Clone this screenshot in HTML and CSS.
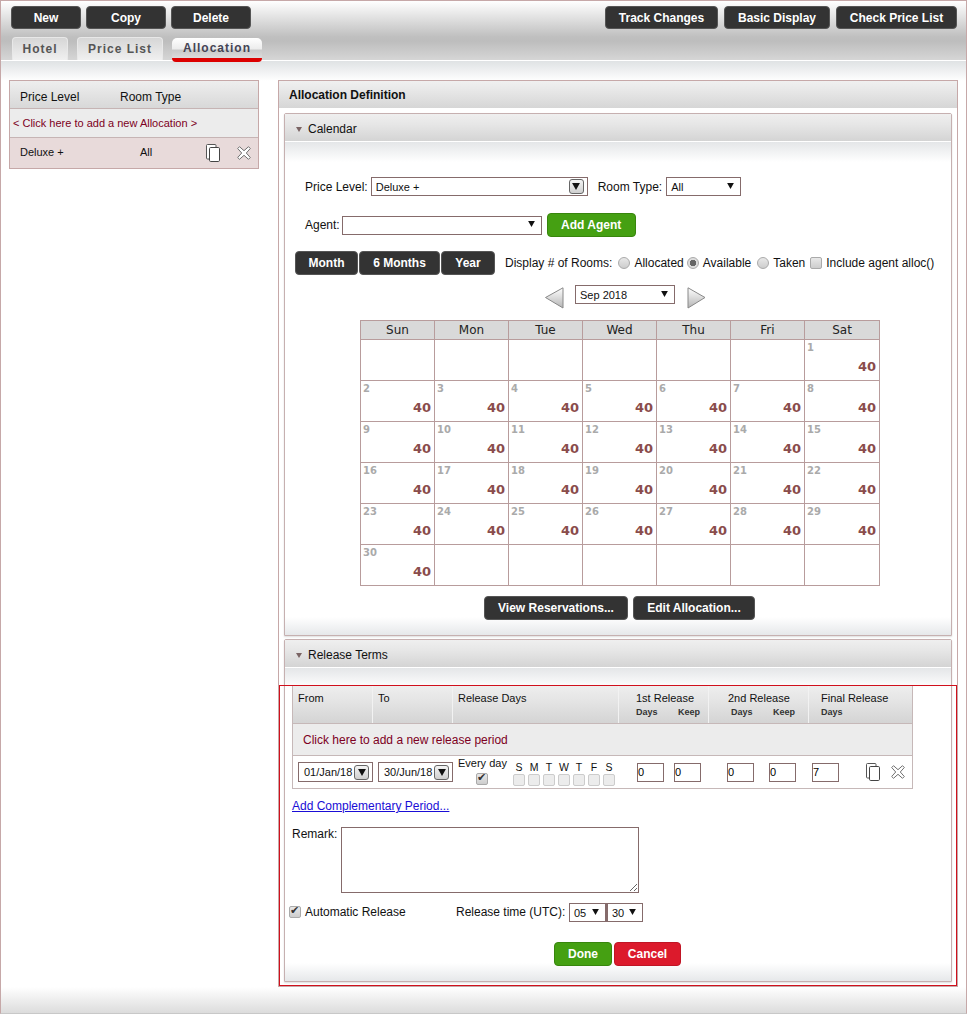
FILE: index.html
```html
<!DOCTYPE html>
<html lang="en">
<head>
<meta charset="utf-8">
<title>Allocation</title>
<link rel="stylesheet" href="styles.css">
</head>
<body>
<svg class="defs" width="0" height="0" aria-hidden="true">
  <defs>
    <linearGradient id="navfill" x1="0" y1="0" x2="0" y2="1">
      <stop offset="0" stop-color="#ffffff"/><stop offset="1" stop-color="#b5b5b5"/>
    </linearGradient>
    <symbol id="copy" viewBox="0 0 14 18">
      <path d="M10 3V1.5Q10 .5 9 .5H1.5Q.5 .5 .5 1.5V14Q.5 15 1.5 15H3" fill="#fff" stroke="#555"/>
      <rect x="3.5" y="3.5" width="10" height="14" rx="1.2" fill="#fff" stroke="#444"/>
    </symbol>
    <symbol id="del" viewBox="0 0 14 14">
      <path d="M2.5 .7 7 4.7 11.5 .7 13.3 2.5 9.3 7 13.3 11.5 11.5 13.3 7 9.3 2.5 13.3 .7 11.5 4.7 7 .7 2.5Z" fill="#fff" stroke="#707070"/>
    </symbol>
    <symbol id="tri" viewBox="0 0 9 8"><path d="M0 0H9L4.5 8Z" fill="#111"/></symbol>
  </defs>
</svg>
<div class="page">
  <header class="topbar">
    <div class="btnrow">
      <div class="group">
        <button class="btn w70">New</button>
        <button class="btn w80">Copy</button>
        <button class="btn w80">Delete</button>
      </div>
      <div class="group gap6">
        <button class="btn w113">Track Changes</button>
        <button class="btn w106">Basic Display</button>
        <button class="btn w121">Check Price List</button>
      </div>
    </div>
    <nav class="tabs">
      <div class="tab t56">Hotel</div>
      <div class="tab t86">Price List</div>
      <div class="tab active">Allocation</div>
    </nav>
  </header>
  <main class="content">
    <aside class="listpanel">
      <div class="listhead"><span class="lc1">Price Level</span><span>Room Type</span></div>
      <div class="listadd">&lt; Click here to add a new Allocation &gt;</div>
      <div class="listrow">
        <span class="lr1">Deluxe +</span><span class="lr2">All</span>
        <svg class="ico-copy"><use href="#copy"/></svg>
        <svg class="ico-del"><use href="#del"/></svg>
      </div>
    </aside>
    <section class="panel">
      <div class="panelhead">Allocation Definition</div>
      <div class="sec sec-cal">
        <div class="sechead"><i class="caret"></i>Calendar</div>
        <div class="secbody cal-body">
          <div class="row r1">
            <span class="lbl">Price Level:</span>
            <div class="sel s217"><span>Deluxe +</span><b class="winarrow"><svg><use href="#tri"/></svg></b></div>
            <span class="lbl ml10">Room Type:</span>
            <div class="sel s75 ml4"><span>All</span><svg class="arrow"><use href="#tri"/></svg></div>
          </div>
          <div class="row r2">
            <span class="lbl">Agent:</span>
            <div class="sel s200 ml2"><span></span><svg class="arrow"><use href="#tri"/></svg></div>
            <button class="btn green w89">Add Agent</button>
          </div>
          <div class="row r3">
            <button class="btn w63">Month</button>
            <button class="btn w81">6 Months</button>
            <button class="btn w54">Year</button>
            <span class="lbl disp">Display # of Rooms:</span>
            <label class="opt o1"><input type="radio" name="d">Allocated</label>
            <label class="opt o2"><input type="radio" name="d" checked>Available</label>
            <label class="opt o3"><input type="radio" name="d">Taken</label>
            <label class="opt"><input type="checkbox">Include agent alloc()</label>
          </div>
          <div class="row r4">
            <svg class="nav" viewBox="0 0 19 22"><path d="M.5 10.5 18 .8V21Z" fill="url(#navfill)" stroke="#888"/></svg>
            <div class="sel s100"><span>Sep 2018</span><svg class="arrow"><use href="#tri"/></svg></div>
            <svg class="nav" viewBox="0 0 19 22"><path d="M18 10.5 1 .8V21Z" fill="url(#navfill)" stroke="#888"/></svg>
          </div>
          <table class="cal">
            <thead><tr><th>Sun</th><th>Mon</th><th>Tue</th><th>Wed</th><th>Thu</th><th>Fri</th><th>Sat</th></tr></thead>
            <tbody>
              <tr><td></td><td></td><td></td><td></td><td></td><td></td><td><div class="cell"><span>1</span><b>40</b></div></td></tr>
              <tr><td><div class="cell"><span>2</span><b>40</b></div></td><td><div class="cell"><span>3</span><b>40</b></div></td><td><div class="cell"><span>4</span><b>40</b></div></td><td><div class="cell"><span>5</span><b>40</b></div></td><td><div class="cell"><span>6</span><b>40</b></div></td><td><div class="cell"><span>7</span><b>40</b></div></td><td><div class="cell"><span>8</span><b>40</b></div></td></tr>
              <tr><td><div class="cell"><span>9</span><b>40</b></div></td><td><div class="cell"><span>10</span><b>40</b></div></td><td><div class="cell"><span>11</span><b>40</b></div></td><td><div class="cell"><span>12</span><b>40</b></div></td><td><div class="cell"><span>13</span><b>40</b></div></td><td><div class="cell"><span>14</span><b>40</b></div></td><td><div class="cell"><span>15</span><b>40</b></div></td></tr>
              <tr><td><div class="cell"><span>16</span><b>40</b></div></td><td><div class="cell"><span>17</span><b>40</b></div></td><td><div class="cell"><span>18</span><b>40</b></div></td><td><div class="cell"><span>19</span><b>40</b></div></td><td><div class="cell"><span>20</span><b>40</b></div></td><td><div class="cell"><span>21</span><b>40</b></div></td><td><div class="cell"><span>22</span><b>40</b></div></td></tr>
              <tr><td><div class="cell"><span>23</span><b>40</b></div></td><td><div class="cell"><span>24</span><b>40</b></div></td><td><div class="cell"><span>25</span><b>40</b></div></td><td><div class="cell"><span>26</span><b>40</b></div></td><td><div class="cell"><span>27</span><b>40</b></div></td><td><div class="cell"><span>28</span><b>40</b></div></td><td><div class="cell"><span>29</span><b>40</b></div></td></tr>
              <tr><td><div class="cell"><span>30</span><b>40</b></div></td><td></td><td></td><td></td><td></td><td></td><td></td></tr>
            </tbody>
          </table>
          <div class="row r5">
            <button class="btn w144">View Reservations...</button>
            <button class="btn w122">Edit Allocation...</button>
          </div>
        </div>
      </div>
      <div class="sec sec-rel">
        <div class="sechead"><i class="caret"></i>Release Terms</div>
        <div class="secbody rel-body">
          <div class="rtable">
            <div class="rhead rgrid">
              <div class="hc pl5">From</div>
              <div class="hc pl5">To</div>
              <div class="hc pl5">Release Days</div>
              <div class="hc h1"><span>1st Release</span><div class="sub"><small>Days</small><small>Keep</small></div></div>
              <div class="hc h2"><span>2nd Release</span><div class="sub s2"><small>Days</small><small>Keep</small></div></div>
              <div class="hc h3"><span>Final Release</span><div class="sub"><small>Days</small></div></div>
            </div>
            <div class="radd">Click here to add a new release period</div>
            <div class="rdata rgrid">
              <div class="dc pl5"><div class="sel s75 tall"><span>01/Jan/18</span><b class="winarrow"><svg><use href="#tri"/></svg></b></div></div>
              <div class="dc pl5"><div class="sel s75 tall"><span>30/Jun/18</span><b class="winarrow"><svg><use href="#tri"/></svg></b></div></div>
              <div class="dc days">
                <div class="every"><span>Every day</span><input class="chk" type="checkbox" checked></div>
                <div class="week">
                  <div class="wk"><span>S</span><i></i></div><div class="wk"><span>M</span><i></i></div><div class="wk"><span>T</span><i></i></div><div class="wk"><span>W</span><i></i></div><div class="wk"><span>T</span><i></i></div><div class="wk"><span>F</span><i></i></div><div class="wk"><span>S</span><i></i></div>
                </div>
              </div>
              <div class="dc d1"><input class="num" value="0"><input class="num" value="0"></div>
              <div class="dc d2"><input class="num" value="0"><input class="num" value="0"></div>
              <div class="dc d3"><input class="num" value="7">
                <svg class="ico-copy m1"><use href="#copy"/></svg>
                <svg class="ico-del m2"><use href="#del"/></svg>
              </div>
            </div>
          </div>
          <a class="complink" href="#">Add Complementary Period...</a>
          <div class="remark"><span class="lbl rlabel">Remark:</span><textarea class="rarea"></textarea></div>
          <div class="autorow">
            <label class="opt auto"><input type="checkbox" checked>Automatic Release</label>
            <span class="lbl rtime">Release time (UTC):</span>
            <div class="sel s37"><span>05</span><svg class="arrow"><use href="#tri"/></svg></div>
            <div class="sel s37 joined"><span>30</span><svg class="arrow"><use href="#tri"/></svg></div>
          </div>
          <div class="finish">
            <button class="btn green w58">Done</button>
            <button class="btn red w67">Cancel</button>
          </div>
        </div>
      </div>
      <div class="redframe"></div>
    </section>
  </main>
  <div class="footband"></div>
</div>
</body>
</html>
```

FILE: styles.css
```css
* { box-sizing: border-box; }
html, body { margin: 0; padding: 0; height: 100%; overflow: hidden; background: #fff; }
body { font: 12px "Liberation Sans", Arial, sans-serif; color: #111; }
.defs { position: absolute; }
.page { height: 1014px; display: flex; flex-direction: column; border: 1px solid #c6a8a8; border-bottom-color: #c8c8c8; }

.topbar { height: 59px; flex: none; position: relative; z-index: 1; background: linear-gradient(#ffffff 0, #bfbfbf 36px, #bdbdbd 40px, #d6d6d6 59px); }
.btnrow { display: flex; justify-content: space-between; padding: 5px 9px 0 10px; }
.group { display: flex; gap: 5px; }
.gap6 { gap: 6px; }
.btn { height: 24px; padding: 0; border: 1px solid #555; border-radius: 4px; background: #333; color: #fff; font: bold 12px "Liberation Sans", Arial, sans-serif; flex: none; }
.btnrow .btn { height: 23px; }
.green { background: #45a012; border-color: #38860d; }
.red { background: #dc1a2c; border-color: #c01525; }
.w70 { width: 70px; } .w80 { width: 80px; } .w113 { width: 113px; } .w106 { width: 106px; } .w121 { width: 121px; }
.w89 { width: 89px; margin-left: 5px; } .w63 { width: 63px; } .w81 { width: 81px; } .w54 { width: 54px; }
.w144 { width: 144px; } .w122 { width: 122px; } .w58 { width: 58px; } .w67 { width: 67px; }

.tabs { display: flex; gap: 9px; padding: 8px 0 0 11px; align-items: flex-start; }
.tab { height: 23px; border: 1px solid #e8e8e8; border-bottom: 0; border-radius: 4px 4px 0 0; background: linear-gradient(#d6d6d6, #f0f0f0); color: #555; font-weight: bold; letter-spacing: 1px; text-align: center; line-height: 22px; }
.t56 { width: 56px; } .t86 { width: 86px; }
.tab.active { width: 90px; height: 24px; margin-top: 1px; color: #445; border: 0; border-radius: 5px 5px 4px 4px; border-bottom: 4px solid #dc0000; line-height: 21px; background: linear-gradient(#ffffff, #ececec 11px, #c9c9c9 12px, #dcdcdc); }

.content { height: 927px; flex: none; border-top: 1px solid #fff; display: flex; align-items: flex-start; padding: 19px 0 0 8px; background: linear-gradient(#dfe2e4 0, #ffffff 20px) no-repeat; }
.listpanel { width: 250px; border: 1px solid #c6a8a8; background: #fff; flex: none; }
.listhead { height: 28px; display: flex; align-items: center; padding: 4px 0 0 10px; background: linear-gradient(#eeeeee, #d8d8d8); border-bottom: 1px solid #c6b4b4; }
.lc1 { width: 100px; }
.listadd { height: 29px; line-height: 28px; padding-left: 3px; font-size: 11px; color: #7d0022; background: #ececec; border-bottom: 1px solid #c6b4b4; }
.listrow { height: 30px; display: flex; align-items: center; font-size: 11px; background: #e8dada; padding-left: 10px; }
.lr1 { width: 120px; margin-bottom: 2px; } .lr2 { width: 66px; margin-bottom: 2px; }
.ico-copy { width: 14px; height: 18px; flex: none; }
.ico-del { width: 14px; height: 14px; flex: none; margin-left: 17px; }

.panel { position: relative; width: 680px; height: 907px; margin-left: 19px; flex: none; border: 1px solid #c6a8a8; background: #fff; }
.panelhead { height: 27px; padding: 7px 0 0 10px; font-weight: bold; background: linear-gradient(#f0f0f0, #e6e6e6 40%, #d6d6d6); }
.sec { width: 668px; margin-left: 5px; border: 1px solid #c6b0b0; border-radius: 2px 2px 0 0; box-shadow: 0 1px 2px #ddd; }
.sec-cal { height: 523px; margin-top: 5px; }
.sec-rel { height: 343px; margin-top: 3px; }
.sechead { height: 28px; padding: 8px 0 0 23px; position: relative; border-bottom: 1px solid #fff; background: linear-gradient(#efefef, #e6e6e6 40%, #d4d4d4); }
.caret { position: absolute; left: 11px; top: 13px; border: 3.5px solid transparent; border-top: 5px solid #7a6464; border-bottom: 0; }
.secbody { background: linear-gradient(#e4e6e8, #ffffff 20px, #ffffff calc(100% - 18px), #e6e8ea); }
.cal-body { height: 493px; padding-top: 35px; }
.rel-body { height: 313px; padding-top: 18px; }

.row { display: flex; align-items: center; }
.lbl { flex: none; }
.ml10 { margin-left: 10px; }
.r1 { height: 19px; padding-left: 20px; }
.r2 { height: 24px; margin-top: 17px; padding-left: 20px; }
.r3 { height: 24px; margin-top: 14px; padding-left: 10px; gap: 1px; }
.disp { margin: 0 5px 0 9px; }
.r4 { height: 22px; margin-top: 10px; padding-left: 260px; align-items: flex-start; }
.r5 { height: 24px; margin-top: 10px; padding-left: 199px; gap: 5px; }

.sel { height: 19px; margin-left: 3px; display: flex; align-items: center; justify-content: space-between; padding: 0 3px 0 4px; border: 1px solid #856b6b; background: #fff; font-size: 11px; flex: none; }
.sel.ml4 { margin-left: 4px; }
.sel.ml2 { margin-left: 2px; }
.s217 { width: 217px; } .s75 { width: 75px; } .s200 { width: 200px; } .s100 { width: 100px; } .s37 { width: 37px; }
.arrow { width: 7px; height: 6px; margin: -2px 3px 0 0; flex: none; }
.winarrow { width: 15px; height: 15px; display: flex; align-items: center; justify-content: center; border: 1px solid #666; border-radius: 3px; background: linear-gradient(#f4f4f4, #cfcfcf); }
.winarrow svg { width: 8px; height: 7px; }
.tall { height: 20px; margin-left: 0; padding-left: 5px; }
.joined { margin-left: 0; border-left-width: 2px; }
.nav { width: 19px; height: 22px; flex: none; margin-top: 2px; }
.r4 .sel { margin: 0 12px 0 11px; }

.opt { display: flex; align-items: center; flex: none; }
.opt input, .chk { appearance: none; margin: 0 4px 0 0; width: 12px; height: 12px; background: linear-gradient(#e8e8e8, #cdcdcd); border: 1px solid #aaa; flex: none; position: relative; }
.o1 { margin-right: 2px; } .o2 { margin-right: 5px; } .o3 { margin-right: 4px; }
.r3 .opt input[type=radio] { border-radius: 50%; }
.r3 .opt input[type=checkbox] { border-radius: 2px; }
.opt input:checked { background: radial-gradient(circle, #666 0 3px, #ddd 3.5px); }
.opt input[type=checkbox]:checked, .chk:checked { border-radius: 2px; background: linear-gradient(#e8e8e8, #cdcdcd); }
.opt input[type=checkbox]:checked::after, .chk:checked::after { content: "\2714"; position: absolute; left: 0; top: -2px; font: 11px/12px "DejaVu Sans", sans-serif; color: #333; }

.cal { width: 520px; margin: 13px 0 0 75px; border-collapse: collapse; table-layout: fixed; }
.cal th, .cal td { border: 1px solid #b89c9c; padding: 0; }
.cal th { width: 74px; height: 19px; background: #d9d9d9; font: 12px "DejaVu Sans", sans-serif; color: #222; }
.cal th:last-child { width: auto; }
.cal td { height: 41px; vertical-align: top; }
.cell { height: 40px; display: flex; flex-direction: column; justify-content: space-between; padding: 1px 3px 6px 2px; font-family: "DejaVu Sans", sans-serif; }
.cell span { font-size: 10px; font-weight: bold; color: #aaa; line-height: 14px; }
.cell b { font-size: 13px; line-height: 15px; color: #8a4c4c; text-align: right; }

.rtable { width: 621px; margin-left: 7px; border: 1px solid #c6b8b8; border-top: 0; }
.rgrid { display: grid; grid-template-columns: 80px 80px 166px 90px 100px 103px; }
.rhead { height: 38px; background: linear-gradient(#eeeeee, #e6e6e6 35%, #d4d4d4); border-bottom: 1px solid #c6b8b8; }
.hc { font-size: 11px; padding-top: 6px; border-right: 1px solid #f2f2f2; }
.hc:last-child { border-right: 0; }
.pl5 { padding-left: 5px; }
.h1 { padding-left: 17px; } .h2 { padding-left: 19px; } .h3 { padding-left: 12px; }
.sub { display: flex; margin-top: 3px; font-weight: bold; color: #333; }
.sub small { font-size: 9px; width: 42px; flex: none; }
.s2 { padding-left: 3px; }
.radd { height: 32px; line-height: 33px; padding-left: 10px; color: #7d0022; background: #ececec; border-bottom: 1px solid #c6b8b8; }
.rdata { height: 32px; }
.dc { display: flex; align-items: center; }
.num { width: 27px; height: 19px; padding: 0; border: 1px solid #856b6b; background: #fff; font: 11px "Liberation Sans", Arial, sans-serif; flex: none; }
.d1 { padding-left: 18px; gap: 10px; }
.d2 { padding-left: 18px; gap: 15px; }
.d3 { padding-left: 3px; }
.m1 { margin-left: 27px; }
.m2 { margin-left: 11px; }
.days { padding-left: 5px; align-items: flex-start; }
.every { width: 55px; font-size: 11px; display: flex; flex-direction: column; align-items: flex-start; padding: 1px 0 0 0; white-space: nowrap; line-height: 13px; }
.chk { margin: 3px 0 0 18px; border-radius: 2px; }
.week { display: flex; gap: 3px; padding-top: 6px; }
.wk { width: 12px; display: flex; flex-direction: column; align-items: center; font-size: 10.5px; line-height: 11px; }
.wk i { width: 12px; height: 12px; margin-top: 1px; border: 1px solid #ccc; border-radius: 2px; background: #ececec; }

.complink { display: block; width: max-content; margin: 10px 0 0 7px; line-height: 14px; color: #1a0dd6; }
.remark { display: flex; margin: 14px 0 0 7px; }
.rlabel { width: 49px; }
.rarea { display: block; width: 298px; height: 66px; margin: 0; padding: 0; border: 1px solid #856b6b; background: #fff; }
.autorow { display: flex; align-items: center; height: 19px; margin: 10px 0 0 4px; }
.auto { width: 167px; margin: -2px 0 0 0; }
.auto input { margin-right: 4px; }
.rtime { width: 113px; margin-top: -2px; }
.autorow .sel { margin: 0; padding: 0 0 0 4px; }
.autorow .arrow { margin-right: 6px; }
.finish { display: flex; gap: 2px; margin: 20px 0 0 269px; }

.redframe { position: absolute; left: 0; right: 0; bottom: 0; top: 604px; border: 1px solid #d0101c; pointer-events: none; }
.footband { flex: 1; background: linear-gradient(#ffffff, #dcdcdc); }
```
